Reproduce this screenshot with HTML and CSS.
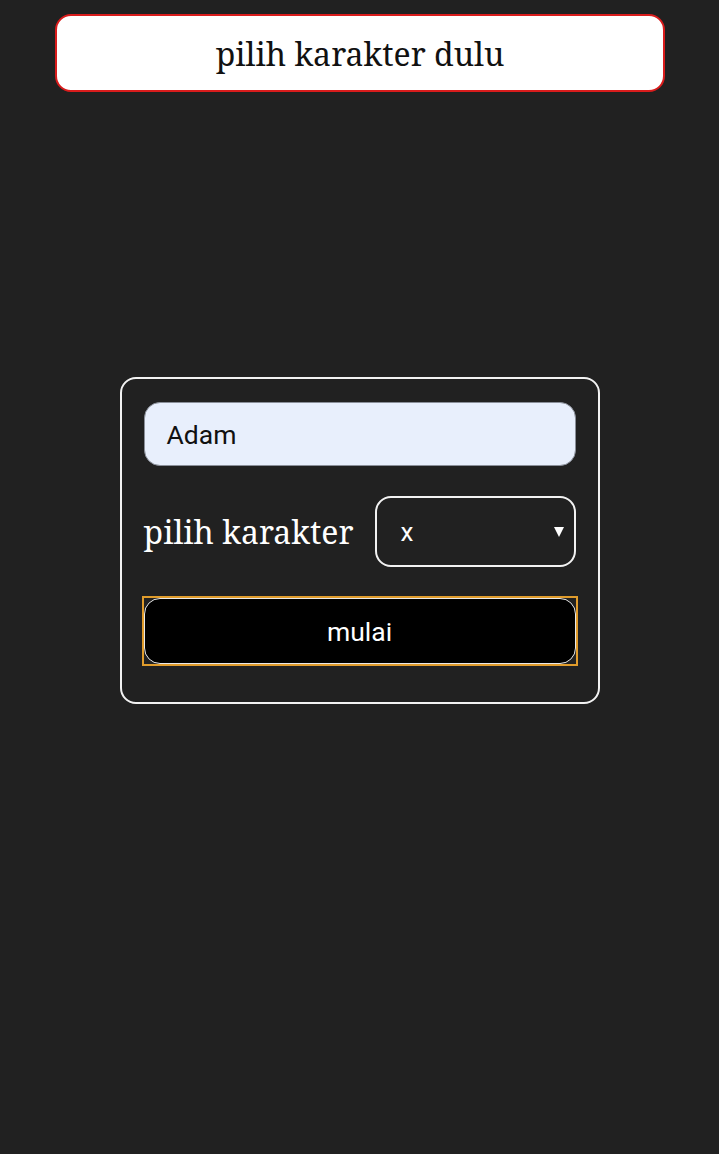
FILE: index.html
```html
<!DOCTYPE html>
<html>
<head>
<meta charset="utf-8">
<link rel="stylesheet" href="styles.css">
</head>
<body>
<div class="notice">pilih karakter dulu</div>
<div class="card">
  <div class="name-input">Adam</div>
  <div class="row">
    <span class="label">pilih karakter</span>
    <div class="select"><span>x</span><span class="arrow"></span></div>
  </div>
  <div class="btn-wrap"><div class="btn">mulai</div></div>
</div>
</body>
</html>
```
FILE: styles.css
```css
html, body {
  margin: 0;
  padding: 0;
  background: #212121;
  height: 100%;
}
body {
  padding-top: 14px;
  box-sizing: border-box;
}
.notice {
  margin: 0 54px 0 55px;
  height: 78px;
  box-sizing: border-box;
  background: #fff;
  border: 2px solid #d91c1c;
  border-radius: 16px;
  display: flex;
  align-items: center;
  justify-content: center;
  font-family: "Noto Serif", "DejaVu Serif", serif;
  font-size: 32px;
  color: #111;
}
.card {
  width: 480px;
  box-sizing: border-box;
  margin: 285px auto 0;
  border: 2px solid #f2f2f2;
  border-radius: 16px;
  padding: 23px 22px 38px;
}
.name-input {
  height: 64px;
  box-sizing: border-box;
  background: #e8effc;
  border: 1px solid #8a8f99;
  border-radius: 16px;
  padding-left: 22px;
  display: flex;
  align-items: center;
  font-family: Roboto, "Noto Sans", sans-serif;
  font-size: 26.5px;
  color: #111;
}
.row {
  display: flex;
  align-items: center;
  justify-content: space-between;
  margin-top: 30px;
}
.label {
  font-family: "Noto Serif", "DejaVu Serif", serif;
  font-size: 32px;
  color: #fff;
}
.select {
  width: 201px;
  height: 71px;
  box-sizing: border-box;
  border: 2px solid #f2f2f2;
  border-radius: 16px;
  display: flex;
  align-items: center;
  justify-content: space-between;
  padding: 0 10px 0 24px;
  font-family: Roboto, "Noto Sans", sans-serif;
  font-size: 26px;
  color: #fff;
}
.arrow {
  width: 0;
  height: 0;
  border-left: 5px solid transparent;
  border-right: 5px solid transparent;
  border-top: 10px solid #fff;
}
.btn-wrap {
  margin-top: 31px;
  outline: 2px solid #e09c2c;
}
.btn {
  height: 66px;
  box-sizing: border-box;
  background: #000;
  border: 1px solid #e8e8e8;
  border-radius: 16px;
  display: flex;
  align-items: center;
  justify-content: center;
  font-family: Roboto, "Noto Sans", sans-serif;
  font-size: 26.5px;
  color: #fff;
}
```
